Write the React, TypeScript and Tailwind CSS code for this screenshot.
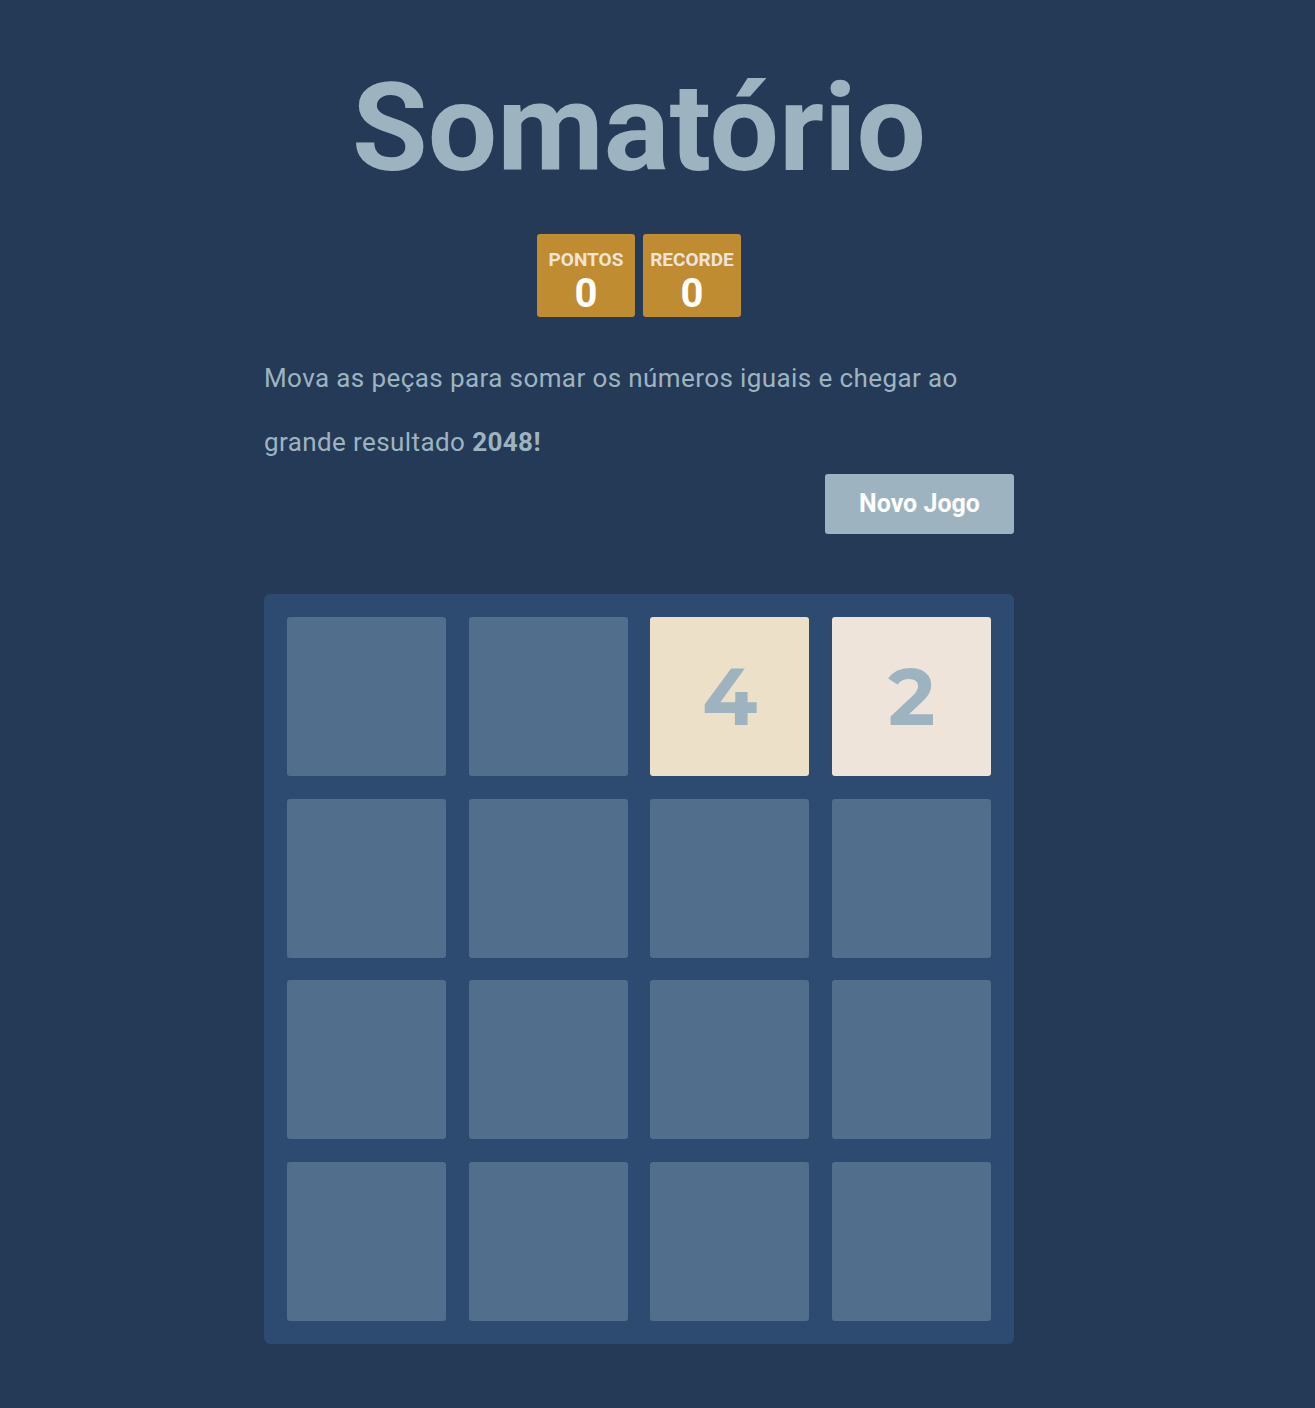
import React from 'react';

const board = [
    [0, 0, 4, 2],
    [0, 0, 0, 0],
    [0, 0, 0, 0],
    [0, 0, 0, 0]
];

const tileClass = (v: number) => {
    if (v === 2) return 'bg-[#eee4da]';
    if (v === 4) return 'bg-[#ede0c8]';
    return 'bg-[#516e8c]';
};

const App = () => {
    return (
        <div className="min-h-[1408px] bg-[#253a57] text-[#9db4c0]" style={{ fontFamily: 'Roboto, "Noto Sans", sans-serif' }}>
            <div className="w-[1278px] flex justify-center">
                <div className="w-[750px] pt-[60px]">
                    <h1 className="text-center text-[123px] font-bold leading-[136px]">Somatório</h1>

                    {/* Placar */}
                    <div className="flex justify-center gap-2 mt-[38px]">
                        <div className="w-[98px] h-[83px] bg-[#c08c31] rounded-[3px] flex flex-col items-center pt-[13px]">
                            <span className="text-[19px] font-bold text-[#eee4da] leading-[26px]">PONTOS</span>
                            <span className="text-[40px] font-bold text-white leading-[42px]">0</span>
                        </div>
                        <div className="w-[98px] h-[83px] bg-[#c08c31] rounded-[3px] flex flex-col items-center pt-[13px]">
                            <span className="text-[19px] font-bold text-[#eee4da] leading-[26px]">RECORDE</span>
                            <span className="text-[40px] font-bold text-white leading-[42px]">0</span>
                        </div>
                    </div>

                    <p className="mt-[29px] text-[26px] tracking-[0.4px] leading-[64px]">
                        Mova as peças para somar os números iguais e chegar ao grande resultado <strong>2048!</strong>
                    </p>

                    <div className="flex justify-end">
                        <button className="w-[189px] h-[60px] bg-[#9db4c0] text-white text-[25px] font-bold rounded-[3px]">Novo Jogo</button>
                    </div>

                    {/* Tabuleiro */}
                    <div className="mt-[60px] bg-[#2d4a70] rounded-[6px] p-[23px] grid grid-cols-4 gap-[22.67px]">
                        {board.flat().map((v, i) => (
                            <div key={i} className={`aspect-square rounded-[3px] flex items-center justify-center text-[80px] font-bold text-[#9db4c0] ${tileClass(v)}`} style={{ fontFamily: 'Montserrat, Inter, sans-serif' }}>
                                {v > 0 ? v : ''}
                            </div>
                        ))}
                    </div>
                </div>
            </div>
        </div>
    );
};

export default App;
